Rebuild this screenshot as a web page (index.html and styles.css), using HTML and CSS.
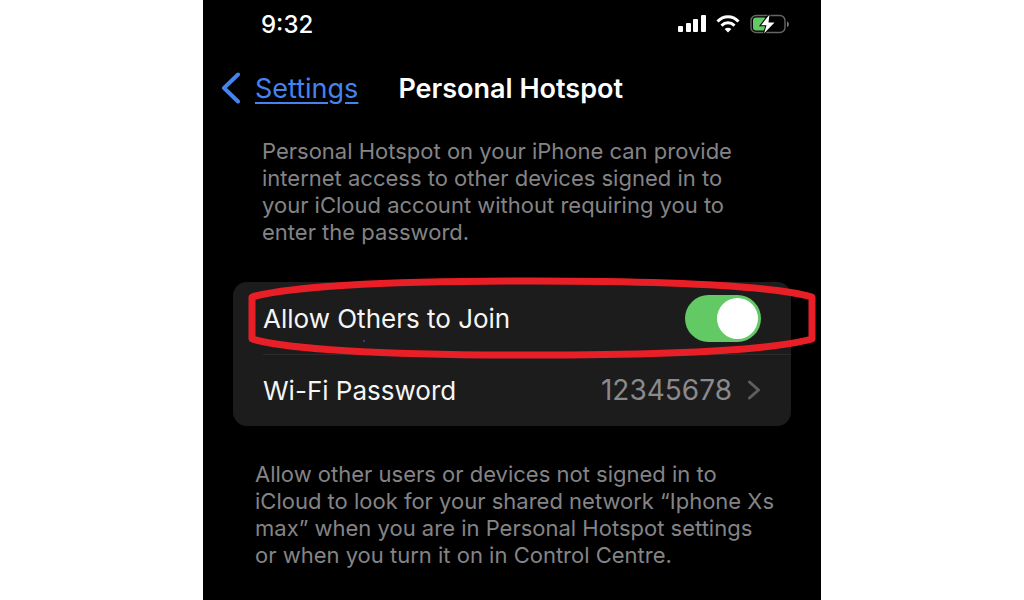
FILE: index.html
```html
<!DOCTYPE html>
<html lang="en">
<head>
    <meta charset="UTF-8">
    <meta name="viewport" content="width=device-width, initial-scale=1.0">
    <title>Personal Hotspot</title>
    <link rel="stylesheet" href="styles.css">
</head>
<body>
    <div class="phone">
        <div class="status-bar">
            <span class="time">9:32</span>
            <div class="status-icons">
                <svg width="28" height="18" viewBox="0 0 28 18" fill="#fff">
                    <rect x="0" y="11" width="5" height="6" rx="1"/>
                    <rect x="8" y="8" width="5" height="9" rx="1"/>
                    <rect x="15" y="4" width="5" height="13" rx="1"/>
                    <rect x="23" y="0" width="5" height="17" rx="1"/>
                </svg>
                <svg width="24" height="18" viewBox="0 0 24 18" fill="none" stroke="#fff" stroke-width="3">
                    <path d="M1.5 6.5C7.5 0.2 16.5 0.2 22.5 6.5"/>
                    <path d="M5.5 10.6C9.3 6.9 14.7 6.9 18.5 10.6"/>
                    <path d="M8.6 14C10.6 12.2 13.4 12.2 15.4 14L12 17.6Z" fill="#fff" stroke="none"/>
                </svg>
                <svg width="40" height="20" viewBox="0 0 40 20">
                    <rect x="1" y="1.5" width="34" height="17" rx="5" fill="none" stroke="#666" stroke-width="1.4"/>
                    <path d="M37 7.5C39.5 8 39.5 12.5 37 13Z" fill="#777"/>
                    <rect x="3" y="3.5" width="14" height="13" rx="3" fill="#62c965"/>
                    <path d="M19.5 0.5L11 11.2H16.5L14 19.5L24.5 8.5H18.5Z" fill="#fff" stroke="#000" stroke-width="2" paint-order="stroke"/>
                </svg>
            </div>
        </div>

        <header class="nav-bar">
            <a class="back" href="#">
                <svg width="20" height="32" viewBox="0 0 20 32" fill="none" stroke="#4583ee" stroke-width="4" stroke-linecap="round" stroke-linejoin="round">
                    <path d="M17 2.5L3 16L17 29.5"/>
                </svg>
                <span>Settings</span>
            </a>
            <h1>Personal Hotspot</h1>
        </header>

        <p class="intro">Personal Hotspot on your iPhone can provide<br>
            internet access to other devices signed in to<br>
            your iCloud account without requiring you to<br>
            enter the password.</p>

        <div class="card">
            <div class="row">
                <label for="allowJoin">Allow Others to Join</label>
                <input type="checkbox" id="allowJoin" class="switch" checked>
                <svg class="highlight" viewBox="0 0 568 84" preserveAspectRatio="none" fill="none">
                    <path d="M4 21C44 10 150 5 284 5S524 10 564 21V63C524 74 418 79 284 79S44 74 4 63Z" stroke="#e81f26" stroke-width="7" stroke-linejoin="round"/>
                    <circle cx="116" cy="65" r="1" fill="#3b3fd0"/>
                </svg>
            </div>
            <a class="row" href="#">
                <span>Wi-Fi Password</span>
                <span class="value">12345678
                    <svg width="14" height="20" viewBox="0 0 14 20" fill="none" stroke="#5f5f62" stroke-width="3" stroke-linecap="round" stroke-linejoin="round">
                        <path d="M2.5 2L11.5 10L2.5 18"/>
                    </svg>
                </span>
            </a>
        </div>

        <p class="footnote">Allow other users or devices not signed in to<br>
            iCloud to look for your shared network “Iphone Xs<br>
            max” when you are in Personal Hotspot settings<br>
            or when you turn it on in Control Centre.</p>
    </div>
</body>
</html>
```

FILE: styles.css
```css
* {
    box-sizing: border-box;
}
body {
    margin: 0;
    background-color: #fff;
    font-family: Inter, "Liberation Sans", sans-serif;
}
.phone {
    max-width: 618px;
    min-height: 100vh;
    margin: 0 auto;
    background-color: #000;
    color: #fff;
}
.status-bar {
    display: flex;
    justify-content: space-between;
    align-items: center;
    height: 48px;
    padding: 0 31px 0 58px;
}
.time {
    font-size: 24px;
    font-weight: 500;
}
.status-icons {
    display: flex;
    align-items: center;
    gap: 10px;
}
.nav-bar {
    display: flex;
    align-items: center;
    gap: 40px;
    height: 80px;
    padding: 0 18px;
}
.back {
    display: flex;
    align-items: center;
    gap: 14px;
    color: #4583ee;
    font-size: 27px;
    text-underline-offset: 4px;
}
h1 {
    margin: 0;
    font-size: 27px;
    font-weight: 600;
}
p {
    margin: 0;
    color: #848486;
    font-size: 22px;
    line-height: 27px;
}
.intro {
    padding: 10px 40px 0 59px;
}
.card {
    margin: 36px 30px 0;
    border-radius: 14px;
    background-color: #1c1c1c;
    font-size: 26px;
}
.row {
    position: relative;
    display: flex;
    justify-content: space-between;
    align-items: center;
    height: 72px;
    padding: 0 30px;
    color: #f5f5f5;
    text-decoration: none;
}
.row + .row::before {
    content: "";
    position: absolute;
    top: 0;
    left: 30px;
    right: 0;
    height: 1px;
    background-color: #2c2c2e;
}
.switch {
    appearance: none;
    width: 76px;
    height: 47px;
    margin: 0;
    padding: 3px;
    border-radius: 24px;
    background-color: #62c965;
    cursor: pointer;
}
.switch::before {
    content: "";
    display: block;
    width: 41px;
    height: 41px;
    border-radius: 50%;
    background-color: #fff;
}
.switch:checked::before {
    margin-left: auto;
}
.highlight {
    position: absolute;
    z-index: 1;
    top: -6px;
    left: 15px;
    width: calc(100% + 10px);
    height: 84px;
    pointer-events: none;
}
.value {
    display: flex;
    align-items: center;
    gap: 15px;
    color: #8a8a8d;
    font-size: 28px;
}
.footnote {
    padding: 35px 40px 30px 52px;
}
```
